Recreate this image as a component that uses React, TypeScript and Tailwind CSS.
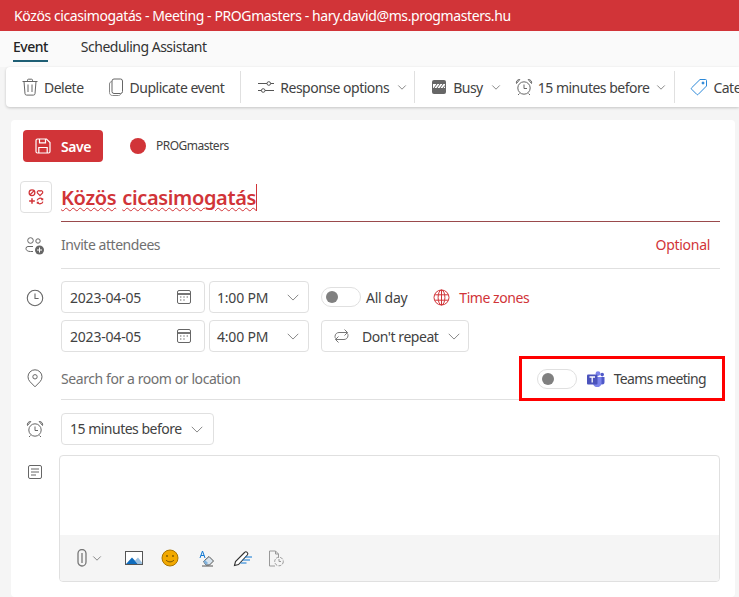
import React from "react";

const Chev = ({ s = 10, c = "#777" }: { s?: number; c?: string }) => (
  <svg width={s} height={s} viewBox="0 0 16 16" fill="none" stroke={c} strokeWidth={s > 12 ? 1 : 1.4} className="shrink-0">
    <path d="M2 5.5l6 6 6-6" />
  </svg>
);

const Trash = () => (
  <svg width="18" height="18" viewBox="0 0 18 18" fill="none" stroke="#666" strokeWidth="1" className="shrink-0">
    <path d="M1.5 3.5h15M6.5 3.5V2.200a1 1 0 0 1 1-1h3a1 1 0 0 1 1 1v1.300M3 3.500l1 12.200a1.600 1.600 0 0 0 1.600 1.400h6.800a1.600 1.600 0 0 0 1.600-1.400l1-12.200M7 6.500v7.500M11 6.500v7.500" />
  </svg>
);
const Copy = () => (
  <svg width="16" height="18" viewBox="0 0 16 18" fill="none" stroke="#666" strokeWidth="1" className="shrink-0">
    <rect x="4" y="1" width="10.500" height="14.500" rx="2" />
    <path d="M4 3.500C2.500 3.700 1.500 4.500 1.500 6v8.500c0 1.700 1.200 3 3 3h6c1 0 1.800-.4 2.200-1.500" stroke="#888" />
  </svg>
);
const Sliders = () => (
  <svg width="18" height="16" viewBox="0 0 18 16" fill="none" stroke="#555" strokeWidth="1" className="shrink-0">
    <path d="M1 4.500h9M13.500 4.500H17M1 11.500h3.500M8 11.500h9" />
    <circle cx="11.800" cy="4.500" r="1.800" />
    <circle cx="6.200" cy="11.500" r="1.800" />
  </svg>
);
const BusyIcon = () => (
  <svg width="16" height="16" viewBox="0 0 16 16" className="shrink-0">
    <rect x="1" y="1" width="14" height="14" rx="2" fill="#666" />
    <rect x="2" y="5" width="12" height="4" fill="#fff" />
    <path d="M3 9l3-4M6 9l3-4M9 9l3-4M12 9l2-2.600" stroke="#666" strokeWidth="1" />
  </svg>
);
const AlarmIcon = ({ c = "#666" }: { c?: string }) => (
  <svg width="18" height="18" viewBox="0 0 18 18" fill="none" stroke={c} strokeWidth="1" className="shrink-0">
    <circle cx="9" cy="10" r="6.200" />
    <path d="M9 6.500V10.500h3M1.500 5.500C.8 3.800 2.300 1.200 4.800 1.500zM16.500 5.500c.7-1.700-.8-4.300-3.300-4zM4.500 15.500L3 17M13.500 15.500L15 17" />
  </svg>
);
const Tag = () => (
  <svg width="18" height="18" viewBox="0 0 18 18" fill="none" stroke="#2b88d8" strokeWidth="1" className="shrink-0">
    <path d="M10 1.500h5.500a1 1 0 0 1 1 1V8L8.200 16.400a1 1 0 0 1-1.400 0l-5.200-5.200a1 1 0 0 1 0-1.400z" />
    <circle cx="13" cy="5" r="1" fill="#2b88d8" />
  </svg>
);
const FloppyIcon = () => (
  <svg width="16" height="16" viewBox="0 0 16 16" fill="none" stroke="#fff" strokeWidth="1.200" className="shrink-0">
    <path d="M1 2.500A1.500 1.500 0 0 1 2.500 1h9L15 4.500v9a1.500 1.500 0 0 1-1.500 1.500h-11A1.500 1.500 0 0 1 1 13.500z" />
    <path d="M4.500 1v3.800h6V1M3.800 15V9.500h8.400V15" />
  </svg>
);
const CategoryEmoji = () => (
  <svg width="16" height="16" viewBox="0 0 14 14" fill="none" stroke="#d13438" strokeWidth="1.100">
    <circle cx="3.500" cy="3.300" r="2.500" />
    <path d="M1.800 5l3.400-3.400" />
    <path d="M10.500 5.800L8.200 3.400a1.400 1.400 0 0 1 2.300-1.500 1.400 1.400 0 0 1 2.300 1.500z" />
    <path d="M3.500 8v5M1 10.500h5" strokeWidth="1.300" />
    <path d="M8 10a2.600 2.600 0 0 1 4.600-.9M13 11a2.600 2.600 0 0 1-4.600.9M12.800 8v1.300h-1.300M8.200 13v-1.300h1.300" />
  </svg>
);
const People = () => (
  <svg width="20" height="20" viewBox="0 0 20 20" fill="none" stroke="#666" strokeWidth="1" className="shrink-0">
    <circle cx="5.500" cy="4.500" r="2.800" />
    <circle cx="13" cy="5" r="2.200" />
    <path d="M1 12.500A2 2 0 0 1 3 10.500h5M1 12.500c0 2 1.800 3 4.500 3H8" />
    <circle cx="14.500" cy="14" r="4.500" fill="#666" stroke="none" />
    <path d="M14.500 11.500v5M12 14h5" stroke="#fff" />
  </svg>
);
const Clock = () => (
  <svg width="18" height="18" viewBox="0 0 20 20" fill="none" stroke="#666" strokeWidth="1.200" className="shrink-0">
    <circle cx="10" cy="10" r="8.600" />
    <path d="M10 5v5.500h4" />
  </svg>
);
const Calendar = () => (
  <svg width="16" height="16" viewBox="0 0 16 16" fill="none" stroke="#666" strokeWidth="1" className="shrink-0">
    <rect x="1.500" y="1.500" width="13" height="13" rx="1.500" />
    <path d="M1.500 5h13" strokeWidth="1.800" />
    <path d="M4 8h1.400M7.300 8h1.400M10.600 8h1.400M4 11h1.400M7.300 11h1.400" strokeWidth="1.200" />
  </svg>
);
const Globe = () => (
  <svg width="17" height="17" viewBox="0 0 17 17" fill="none" stroke="#d13438" strokeWidth="1" className="shrink-0">
    <circle cx="8.500" cy="8.500" r="7.500" />
    <ellipse cx="8.500" cy="8.500" rx="3.400" ry="7.500" />
    <path d="M1.700 5.800h13.600M1.700 11.200h13.600M8.500 1v15" />
  </svg>
);
const Repeat = () => (
  <svg width="17" height="16" viewBox="0 0 17 16" fill="none" stroke="#777" strokeWidth="1" className="shrink-0">
    <path d="M2.500 10.500A4.500 4.500 0 0 1 2 8.500C2 6 4 4.500 6 4.500h8.500M11.500 1.500l3 3-3 3M14.500 5.500c.4.700.5 1.300.5 2 0 2.500-2 4-4 4H2.500M5.500 8.500l-3 3 3 3" />
  </svg>
);
const Pin = () => (
  <svg width="16" height="19" viewBox="0 0 16 19" fill="none" stroke="#666" strokeWidth="1" className="shrink-0">
    <path d="M8 17.800L3 12.700a7 7 0 1 1 10 0z" />
    <circle cx="8" cy="7.800" r="2.200" />
  </svg>
);
const TeamsLogo = () => (
  <svg width="18" height="16" viewBox="0 0 18 16" className="shrink-0">
    <circle cx="11" cy="2.600" r="2.400" fill="#7b83eb" />
    <circle cx="15.200" cy="3.600" r="1.800" fill="#5059c9" />
    <path d="M12.500 6h5v5a2.500 2.500 0 0 1-5 0z" fill="#5059c9" />
    <path d="M6 6h8.500v6a4.200 4.200 0 0 1-8.500 0z" fill="#7b83eb" />
    <rect x="0" y="3.600" width="10.500" height="10" rx="1" fill="#4b53bc" />
    <path d="M2.500 6h5.500M5.200 6v5.500" stroke="#fff" strokeWidth="1.300" fill="none" />
  </svg>
);
const NoteIcon = () => (
  <svg width="16" height="16" viewBox="0 0 16 16" fill="none" stroke="#666" strokeWidth="1" className="shrink-0">
    <rect x="1.500" y="1.500" width="13" height="13" rx="1.500" />
    <path d="M4 5h8M4 8h8M4 11h5" />
  </svg>
);
const Clip = () => (
  <svg width="10" height="18" viewBox="0 0 10 18" fill="none" stroke="#777" strokeWidth="1.300" className="shrink-0">
    <path d="M1 4.500a4 4 0 0 1 8 0V13a4 4 0 0 1-8 0zM5 4v10" />
  </svg>
);
const ImageIcon = () => (
  <svg width="18" height="14" viewBox="0 0 18 14" className="shrink-0">
    <rect x=".5" y=".5" width="17" height="13" fill="#fff" stroke="#555" />
    <path d="M1 13l6-6.500L13 13z" fill="#0f6cbd" />
    <path d="M10 9.500l3-3 4 5v1.500h-4z" fill="#9bc0e0" />
  </svg>
);
const Smile = () => (
  <svg width="18" height="18" viewBox="0 0 18 18" className="shrink-0">
    <circle cx="9" cy="9" r="8" fill="#f2a900" stroke="#a87400" strokeWidth="1" />
    <circle cx="6" cy="7" r="0.900" fill="#7a5600" />
    <circle cx="12" cy="7" r="0.900" fill="#7a5600" />
    <path d="M5 11c2 2.500 6 2.500 8 0" fill="none" stroke="#7a5600" strokeWidth="1" />
  </svg>
);
const EraserA = () => (
  <svg width="16" height="17" viewBox="0 0 16 17" fill="none" className="shrink-0">
    <path d="M1 8L3.500 1 6 8M1.900 5.500h3.200" stroke="#0f78d4" strokeWidth="1" />
    <path d="M4.500 11.500L10 6.500l4.500 4.500-4 4H7z" fill="#d8e4ee" stroke="#555" strokeWidth="1" />
    <path d="M4.500 11.500l2.500 3.500 2-2-3-3z" fill="#7fb2dd" />
    <path d="M3 16h11" stroke="#555" strokeWidth="1" />
  </svg>
);
const PenLines = () => (
  <svg width="20" height="17" viewBox="0 0 20 17" fill="none" className="shrink-0">
    <path d="M1.500 15.500l1-4L11.500 2.500a1.800 1.800 0 0 1 2.800 2.500L5.500 14.500z" fill="#fff" stroke="#333" strokeWidth="1.100" />
    <path d="M12 7h7M9.500 10h7.500M7.500 13h6" stroke="#0f78d4" strokeWidth="1" />
  </svg>
);
const DocClock = () => (
  <svg width="17" height="17" viewBox="0 0 17 17" fill="none" stroke="#999" strokeWidth="1" className="shrink-0">
    <path d="M7 16H1.500V1H7.500L10.500 4v3.500M7.500 1v3h3" />
    <circle cx="11" cy="11.500" r="4.300" strokeDasharray="3 1.200" />
    <path d="M11 9v2.500h2" />
  </svg>
);

const Toggle = () => (
  <div className="w-[40px] h-[20px] rounded-full border border-[#e0e0e0] bg-white flex items-center pl-[4px] shrink-0">
    <div className="w-[12px] h-[12px] rounded-full bg-[#808080]" />
  </div>
);

const Sep = () => <div className="w-px h-[32px] bg-[#e0e0e0] shrink-0" />;

const Box = ({ className, children }: { className: string; children: React.ReactNode }) => (
  <div className={`h-[32px] border border-[#e0e0e0] rounded-[4px] bg-white flex items-center shrink-0 whitespace-nowrap text-[14px] text-[#424242] ${className}`}>
    {children}
  </div>
);

const Row = ({ icon, className, children }: { icon: React.ReactNode; className?: string; children: React.ReactNode }) => (
  <div className={`flex ${className ?? ""}`}>
    <div className="w-[40px] shrink-0 flex justify-center pl-[5px] pr-[5px] -ml-[5px] mr-[5px]">{icon}</div>
    {children}
  </div>
);

export default function App() {
  return (
    <div
      className="w-[739px] h-[597px] overflow-hidden bg-[#f5f5f5] text-[#424242] flex flex-col"
      style={{ fontFamily: '"Noto Sans", "Open Sans", sans-serif' }}
    >
      <div className="h-[31px] bg-[#d13438] text-white text-[14px] tracking-[-0.4px] flex items-center pl-[14px] shrink-0 whitespace-nowrap">
        Közös cicasimogatás - Meeting - PROGmasters - hary.david@ms.progmasters.hu
      </div>

      <div className="h-[36px] bg-[#fafafa] flex items-start pl-[13px] gap-[33px] text-[14px] tracking-[-0.5px] shrink-0 text-[#242424]">
        <div className="pt-[5px] h-[31px] border-b-[2px] border-[#1f5f75] font-medium">Event</div>
        <div className="pt-[5px] text-[#333]">Scheduling Assistant</div>
      </div>

      <div className="ml-[6px] h-[40px] bg-white rounded-l-[4px] shadow-[0_1px_3px_rgba(0,0,0,0.2)] flex items-center pl-[15px] text-[14px] tracking-[-0.5px] text-[#424242] whitespace-nowrap shrink-0 overflow-hidden">
        <Trash />
        <span className="ml-[5px]">Delete</span>
        <span className="ml-[24px] flex"><Copy /></span>
        <span className="ml-[6px]">Duplicate event</span>
        <span className="ml-[16px]"><Sep /></span>
        <span className="ml-[16px] flex"><Sliders /></span>
        <span className="ml-[5px]">Response options</span>
        <span className="ml-[8px]"><Chev /></span>
        <span className="ml-[7px]"><Sep /></span>
        <span className="ml-[16px] flex"><BusyIcon /></span>
        <span className="ml-[6px]">Busy</span>
        <span className="ml-[8px]"><Chev /></span>
        <span className="ml-[14px] flex"><AlarmIcon /></span>
        <span className="ml-[5px]">15 minutes before</span>
        <span className="ml-[7px]"><Chev /></span>
        <span className="ml-[8px]"><Sep /></span>
        <span className="ml-[15px] flex"><Tag /></span>
        <span className="ml-[5px]">Categorize</span>
      </div>

      <div className="ml-[11px] mt-[13px] w-[724px] flex-1 bg-white rounded-[4px] pl-[9px] pr-[15px] flex flex-col">
        <div className="flex items-center gap-[27px] pl-[3px] pt-[10px] h-[42px] shrink-0">
          <button className="w-[80px] h-[32px] bg-[#d13438] rounded-[4px] flex items-center justify-center gap-[10px] text-white text-[14px] font-semibold tracking-[-0.4px]">
            <FloppyIcon />
            Save
          </button>
          <div className="flex items-center gap-[10px] text-[12px] tracking-[-0.5px] text-[#424242]">
            <div className="w-[16px] h-[16px] rounded-full bg-[#d13438]" />
            PROGmasters
          </div>
        </div>

        <div className="flex mt-[19px] h-[41px] shrink-0">
          <div className="w-[32px] h-[32px] rounded-[4px] border border-[#e0e0e0] flex items-center justify-center shrink-0">
            <CategoryEmoji />
          </div>
          <div className="ml-[9px] flex-1 h-[41px] border-b border-[#9a4a4c] text-[20px] font-semibold tracking-[-0.35px] text-[#d13438] flex items-start pt-[2px]">
            <span className="underline decoration-wavy decoration-[#d13438] decoration-1 underline-offset-2">Közös</span>
            <span className="ml-[6px] underline decoration-wavy decoration-[#d13438] decoration-1 underline-offset-2">cicasimogatás</span>
            <span className="w-px h-[27px] bg-[#d13438] mt-[1px]" />
          </div>
        </div>

        <Row className="h-[47px] shrink-0 items-center" icon={<People />}>
          <div className="ml-[1px] flex-1 h-full border-b border-[#e0e0e0] flex items-center justify-between text-[14px] tracking-[-0.45px] pb-[1px]">
            <span className="text-[#707070]">Invite attendees</span>
            <span className="text-[#d13438] pr-[10px] tracking-[-0.3px]">Optional</span>
          </div>
        </Row>

        <Row className="mt-[12px] shrink-0" icon={<div className="pt-[8px]"><Clock /></div>}>
          <div className="ml-[1px] flex flex-col gap-[7px]">
            <div className="flex items-center gap-[4px]">
              <Box className="w-[144px] pl-[8px] pr-[12px] justify-between tracking-[-0.2px]">2023-04-05<Calendar /></Box>
              <Box className="w-[100px] pl-[7px] pr-[8px] justify-between tracking-[-0.2px]">1:00 PM<Chev s={14} /></Box>
              <div className="ml-[8px]"><Toggle /></div>
              <span className="ml-[1px] text-[14px] tracking-[-0.3px]">All day</span>
              <span className="ml-[22px] flex"><Globe /></span>
              <span className="ml-[5px] text-[14px] tracking-[-0.45px] text-[#d13438]">Time zones</span>
            </div>
            <div className="flex items-center gap-[4px]">
              <Box className="w-[144px] pl-[8px] pr-[12px] justify-between tracking-[-0.2px]">2023-04-05<Calendar /></Box>
              <Box className="w-[100px] pl-[7px] pr-[8px] justify-between tracking-[-0.2px]">4:00 PM<Chev s={14} /></Box>
              <Box className="ml-[8px] w-[148px] pl-[11px] pr-[7px] tracking-[-0.45px]"><Repeat /><span className="ml-[12px] flex-1">Don't repeat</span><Chev s={14} /></Box>
            </div>
          </div>
        </Row>

        <Row className="mt-[5px] h-[43px] shrink-0 items-center" icon={<Pin />}>
          <div className="relative ml-[1px] flex-1 h-full border-b border-[#e0e0e0] flex items-center justify-between text-[14px] tracking-[-0.42px] pt-[1px]">
            <span className="text-[#707070]">Search for a room or location</span>
            <div className="flex items-center pr-[14px]">
              <Toggle />
              <span className="ml-[10px] flex"><TeamsLogo /></span>
              <span className="ml-[9px] tracking-[-0.65px]">Teams meeting</span>
            </div>
            <div className="absolute left-[458px] top-[-1px] w-[206px] h-[45px] border-[3px] border-[#ff0000]" />
          </div>
        </Row>

        <Row className="mt-[13px] shrink-0 items-center" icon={<AlarmIcon />}>
          <Box className="ml-[1px] w-[153px] pl-[8px] pr-[9px] pb-[1px] justify-between tracking-[-0.5px]">15 minutes before<Chev s={14} /></Box>
        </Row>

        <Row className="mt-[10px] shrink-0" icon={<div className="pt-[9px]"><NoteIcon /></div>}>
          <div className="-ml-[1px] flex-1 h-[127px] border border-[#e0e0e0] rounded-[4px] flex flex-col overflow-hidden">
            <div className="flex-1" />
            <div className="h-[46px] bg-[#f5f5f5] flex items-center pl-[17px]">
              <Clip />
              <span className="ml-[5px]"><Chev /></span>
              <span className="ml-[23px] flex"><ImageIcon /></span>
              <span className="ml-[18px] flex"><Smile /></span>
              <span className="ml-[20px] flex"><EraserA /></span>
              <span className="ml-[18px] flex"><PenLines /></span>
              <span className="ml-[15px] flex"><DocClock /></span>
            </div>
          </div>
        </Row>
      </div>
    </div>
  );
}
